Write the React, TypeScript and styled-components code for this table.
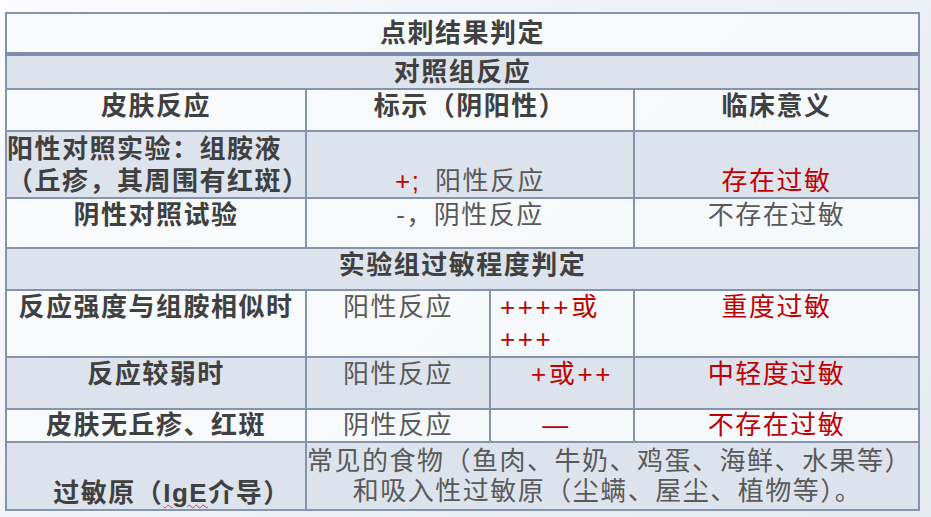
import styled, { createGlobalStyle } from "styled-components";

const GlobalStyle = createGlobalStyle`
  html, body {
    margin: 0;
    padding: 0;
  }
  body {
    width: 931px;
    height: 517px;
    overflow: hidden;
    background: linear-gradient(135deg, #fbfcfe 0%, #eef2f7 45%, #e6ebf2 100%);
    font-family: "Liberation Sans", "Noto Sans CJK SC", sans-serif;
  }
`;

const Page = styled.div`
  padding: 12px 0 0 5px;
`;

const Table = styled.table`
  width: 913px;
  table-layout: fixed;
  border-collapse: collapse;
  border: 2px solid #7f8ea8;
  font-size: 26px;
  letter-spacing: 1.5px;
  color: #595959;
`;

const Row = styled.tr<{ $shade?: boolean; $h: number; $thick?: boolean }>`
  height: ${(p) => p.$h}px;
  background: ${(p) => (p.$shade ? "#dde3ec" : "rgba(248, 250, 252, 0.85)")};
  ${(p) => (p.$thick ? "border-bottom: 4px solid #7f8ea8;" : "")}
`;

const Cell = styled.td<{
  $align?: "left" | "center";
  $valign?: "top" | "middle" | "bottom";
  $bold?: boolean;
  $lh?: number;
  $pl?: number;
  $pr?: number;
}>`
  border: 2px solid #8594ad;
  padding: 0 ${(p) => p.$pr ?? 0}px 0 ${(p) => p.$pl ?? 0}px;
  text-align: ${(p) => p.$align ?? "center"};
  vertical-align: ${(p) => p.$valign ?? "top"};
  font-weight: ${(p) => (p.$bold ? 700 : 400)};
  color: ${(p) => (p.$bold ? "#404040" : "#595959")};
  line-height: ${(p) => p.$lh ?? 32}px;
  white-space: nowrap;
`;

const Red = styled.span<{ $wide?: boolean }>`
  color: #c00000;
  ${(p) => (p.$wide ? "letter-spacing: 2.6px;" : "")}
`;

const Squiggle = styled.span`
  text-decoration: underline wavy #d23a3a 1px;
  text-underline-offset: 2px;
`;

export default function App() {
  return (
    <>
      <GlobalStyle />
      <Page>
        <Table>
          <colgroup>
            <col style={{ width: 300 }} />
            <col style={{ width: 184 }} />
            <col style={{ width: 144 }} />
            <col style={{ width: 285 }} />
          </colgroup>
          <tbody>
            <Row $h={41} $thick>
              <Cell colSpan={4} $bold $valign="middle">点刺结果判定</Cell>
            </Row>
            <Row $h={34} $shade>
              <Cell colSpan={4} $bold $valign="middle">对照组反应</Cell>
            </Row>
            <Row $h={42}>
              <Cell $bold>皮肤反应</Cell>
              <Cell colSpan={2} $bold>标示（阴阳性）</Cell>
              <Cell $bold>临床意义</Cell>
            </Row>
            <Row $h={67} $shade>
              <Cell $bold $align="left" $valign="middle" $lh={32}>
                阳性对照实验：组胺液
                <br />
                （丘疹，其周围有红斑）
              </Cell>
              <Cell colSpan={2} $valign="bottom">
                <Red>+;</Red>&ensp;阳性反应
              </Cell>
              <Cell $valign="bottom">
                <Red>存在过敏</Red>
              </Cell>
            </Row>
            <Row $h={50}>
              <Cell $bold>阴性对照试验</Cell>
              <Cell colSpan={2}>-，阴性反应</Cell>
              <Cell>不存在过敏</Cell>
            </Row>
            <Row $h={42} $shade>
              <Cell colSpan={4} $bold>实验组过敏程度判定</Cell>
            </Row>
            <Row $h={67}>
              <Cell $bold>反应强度与组胺相似时</Cell>
              <Cell>阳性反应</Cell>
              <Cell $align="left" $pl={9} $lh={32}>
                <Red $wide>
                  ++++或
                  <br />
                  +++
                </Red>
              </Cell>
              <Cell>
                <Red>重度过敏</Red>
              </Cell>
            </Row>
            <Row $h={52} $shade>
              <Cell $bold>反应较弱时</Cell>
              <Cell>阳性反应</Cell>
              <Cell $pl={20}>
                <Red $wide>+或++</Red>
              </Cell>
              <Cell>
                <Red>中轻度过敏</Red>
              </Cell>
            </Row>
            <Row $h={33}>
              <Cell $bold $lh={30}>皮肤无丘疹、红斑</Cell>
              <Cell $lh={30}>阴性反应</Cell>
              <Cell $pr={12} $lh={30}>
                <Red>—</Red>
              </Cell>
              <Cell $lh={30}>
                <Red>不存在过敏</Red>
              </Cell>
            </Row>
            <Row $h={68} $shade>
              <Cell $bold $valign="bottom" $pl={32}>
                过敏原（<Squiggle>IgE</Squiggle>介导）
              </Cell>
              <Cell colSpan={3} $valign="middle" $lh={30} $pr={10}>
                常见的食物（鱼肉、牛奶、鸡蛋、海鲜、水果等）
                <br />
                和吸入性过敏原（尘螨、屋尘、植物等）。
              </Cell>
            </Row>
          </tbody>
        </Table>
      </Page>
    </>
  );
}
